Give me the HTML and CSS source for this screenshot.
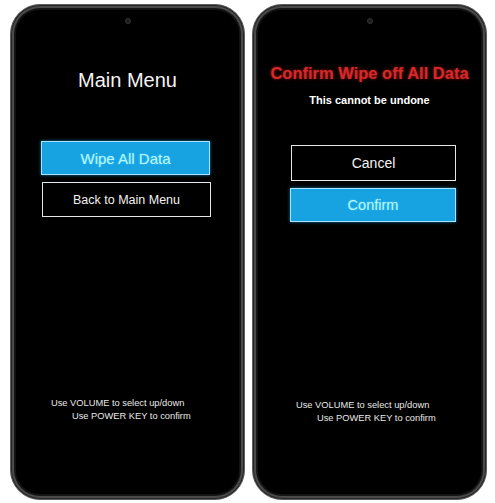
FILE: index.html
```
<!DOCTYPE html>
<html>
<head>
<meta charset="utf-8">
<link rel="stylesheet" href="styles.css">
</head>
<body>
<div class="stage">
  <div class="phone">
    <div class="screen">
      <div class="camera"></div>
      <div class="title">Main Menu</div>
      <div class="btn btn-active wipe">Wipe All Data</div>
      <div class="btn btn-plain back">Back to Main Menu</div>
      <div class="help help-left">
        <div class="l1">Use VOLUME to select up/down</div>
        <div class="l2">Use POWER KEY to confirm</div>
      </div>
    </div>
  </div>
  <div class="phone">
    <div class="screen">
      <div class="camera"></div>
      <div class="warn">Confirm Wipe off All Data</div>
      <div class="sub">This cannot be undone</div>
      <div class="btn btn-plain cancel">Cancel</div>
      <div class="btn btn-active confirm">Confirm</div>
      <div class="help help-right">
        <div class="l1">Use VOLUME to select up/down</div>
        <div class="l2">Use POWER KEY to confirm</div>
      </div>
    </div>
  </div>
</div>
</body>
</html>
```
FILE: styles.css
```
html, body {
  margin: 0;
  padding: 0;
  background: #ffffff;
}
.stage {
  display: flex;
  gap: 7px;
  padding: 4px 0 0 10px;
}
.phone {
  width: 235px;
  height: 496px;
  box-sizing: border-box;
  border-radius: 30px;
  background: #161616;
  border: 1px solid #5e5e5e;
  padding: 5px;
  box-shadow: inset 0 0 0 1px #262626, inset 0 0 0 3px #4a4a4a;
}
.screen {
  height: 100%;
  border-radius: 24px;
  background: #000000;
  display: flex;
  flex-direction: column;
  font-family: "Liberation Sans", Arial, sans-serif;
  color: #ffffff;
  box-shadow: 0 0 0 1px #111;
}
.camera {
  width: 6px;
  height: 6px;
  border-radius: 50%;
  background: #1c1c1c;
  border: 1px solid #333;
  box-sizing: border-box;
  margin: 8px auto 0;
  align-self: center;
}
.title {
  margin-top: 44px;
  text-align: center;
  font-size: 20px;
  line-height: 24px;
  color: #f4f4f4;
}
.btn {
  box-sizing: border-box;
  display: flex;
  align-items: center;
  justify-content: center;
}
.btn-active {
  background: #17a2e2;
  border: 1px solid #a8e4ff;
  color: #b4f8ff;
  box-shadow: 0 0 3px rgba(40, 170, 240, 0.7);
  text-shadow: 0 0 2px rgba(120, 230, 255, 0.6);
  font-size: 15px;
}
.btn-plain {
  background: #000;
  border: 1px solid #e6e6e6;
  color: #f2f2f2;
}
.wipe {
  margin: 49px 0 0 25px;
  width: 169px;
  height: 34px;
}
.back {
  margin: 7px 0 0 26px;
  width: 169px;
  height: 35px;
  font-size: 12.5px;
}
.help {
  font-size: 9.3px;
  line-height: 12.5px;
  color: #e8e8e8;
  white-space: nowrap;
}
.help-left {
  margin-top: 180px;
}
.help-left .l1 { padding-left: 35px; }
.help-left .l2 { padding-left: 56px; }
.help-right {
  margin-top: 177px;
}
.help-right .l1 { padding-left: 38px; }
.help-right .l2 { padding-left: 59px; }
.warn {
  margin-top: 39px;
  text-align: center;
  font-weight: bold;
  font-size: 16.5px;
  line-height: 20px;
  color: #d42a2a;
  text-shadow: 0 0 3px rgba(255, 30, 30, 0.7);
  white-space: nowrap;
}
.sub {
  margin-top: 10px;
  text-align: center;
  font-weight: bold;
  font-size: 11px;
  line-height: 14px;
  color: #ffffff;
}
.cancel {
  margin: 38px 0 0 33px;
  width: 165px;
  height: 36px;
  font-size: 14px;
}
.confirm {
  margin: 7px 0 0 32px;
  width: 166px;
  height: 34px;
  font-size: 14.5px;
}
```
